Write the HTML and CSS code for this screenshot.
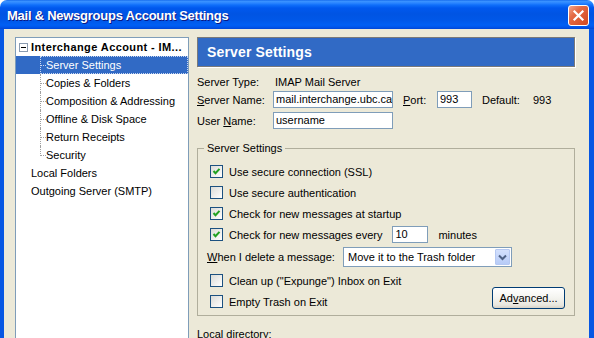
FILE: index.html
```html
<!DOCTYPE html>
<html>
	<head>
		<meta charset="UTF-8">
		<title>Mail &amp; Newsgroups Account Settings</title>
		<link rel="stylesheet" href="styles.css">
	</head>
	<body>
		<div class="window">
			<div class="titlebar">
				<span class="title">Mail &amp; Newsgroups Account Settings</span>
				<span class="close">
					<svg width="19" height="19" viewBox="0 0 19 19"><path d="M5.5 5.5 L13.5 13.5 M13.5 5.5 L5.5 13.5" stroke="#fff" stroke-width="2.2" stroke-linecap="square"/></svg>
				</span>
			</div>
			<div class="client">
				<div class="tree">
					<div class="row account"><span class="twisty"></span>Interchange Account - IM...</div>
					<div class="row child selected"><span class="cell"><span class="branch"></span>Server Settings</span></div>
					<div class="row child"><span class="cell"><span class="branch"></span>Copies &amp; Folders</span></div>
					<div class="row child"><span class="cell"><span class="branch"></span>Composition &amp; Addressing</span></div>
					<div class="row child"><span class="cell"><span class="branch"></span>Offline &amp; Disk Space</span></div>
					<div class="row child"><span class="cell"><span class="branch"></span>Return Receipts</span></div>
					<div class="row child last"><span class="cell"><span class="branch"></span>Security</span></div>
					<div class="row top">Local Folders</div>
					<div class="row top">Outgoing Server (SMTP)</div>
				</div>
				<div class="pane">
					<div class="header">Server Settings</div>
					<div class="field type">
						<span class="label">Server Type:</span>
						<span class="value">IMAP Mail Server</span>
					</div>
					<div class="field server">
						<span class="label"><u>S</u>erver Name:</span>
						<span class="text wide">mail.interchange.ubc.ca</span>
						<span class="port-label"><u>P</u>ort:</span>
						<span class="text port">993</span>
						<span class="default">Default:</span>
						<span>993</span>
					</div>
					<div class="field user">
						<span class="label">User <u>N</u>ame:</span>
						<span class="text wide">username</span>
					</div>
					<fieldset class="group">
						<legend>Server Settings</legend>
						<div class="inner">
							<div class="check"><span class="box"><svg width="11" height="11" viewBox="0 0 11 11"><polyline points="2.5,5 4.5,7.2 8.5,2.8" fill="none" stroke="#21a121" stroke-width="2"/></svg></span>Use secure connection (SSL)</div>
							<div class="check"><span class="box"></span>Use secure authentication</div>
							<div class="check"><span class="box"><svg width="11" height="11" viewBox="0 0 11 11"><polyline points="2.5,5 4.5,7.2 8.5,2.8" fill="none" stroke="#21a121" stroke-width="2"/></svg></span>Check for new messages at startup</div>
							<div class="check"><span class="box"><svg width="11" height="11" viewBox="0 0 11 11"><polyline points="2.5,5 4.5,7.2 8.5,2.8" fill="none" stroke="#21a121" stroke-width="2"/></svg></span>Check for new messages every<span class="text minutes">10</span>minutes</div>
							<div class="when">
								<span class="when-label"><u>W</u>hen I delete a message:</span>
								<span class="select">
									<span class="select-text">Move it to the Trash folder</span>
									<span class="drop"><svg width="13" height="14" viewBox="0 0 13 14"><polyline points="3,5.5 6.5,9 10,5.5" fill="none" stroke="#4d6185" stroke-width="2"/></svg></span>
								</span>
							</div>
							<div class="lastrows">
								<div class="rows">
									<div class="check clean"><span class="box"></span>Clean up ("Expunge") Inbox on Exit</div>
									<div class="check"><span class="box"></span>Empty Trash on Exit</div>
								</div>
								<span class="button">Ad<u>v</u>anced...</span>
							</div>
						</div>
					</fieldset>
					<div class="localdir">Local directory:</div>
				</div>
			</div>
		</div>
	</body>
</html>
```
FILE: styles.css
```css
*{
	margin:0;padding:0;
}
body{
	width:594px;
	height:338px;
	overflow:hidden;
	background:#fff;
	font-family:"Liberation Sans", Arial, sans-serif;
	font-size:11px;
	color:#000;
}
.window{
	height:460px;
	display:flex;
	flex-direction:column;
}
/* title bar */
.titlebar{
	height:29px;
	flex:none;
	box-sizing:border-box;
	display:flex;
	align-items:center;
	padding:2px 5px 0 7px;
	border-radius:7px 7px 0 0;
	background:linear-gradient(to bottom,#0a5fe8 0,#3d95ff 1px,#2b86ff 3px,#0f6ffa 5px,#0058ee 8px,#0054e3 14px,#0057e8 20px,#005ff4 25px,#0056ec 27px,#0046d6 29px);
}
.title{
	flex:1;
	color:#fff;
	font-weight:bold;
	font-size:13px;
	letter-spacing:-0.25px;
	text-shadow:1px 1px #0a1883;
}
.close{
	width:21px;
	height:21px;
	box-sizing:border-box;
	border:1px solid #fff;
	border-radius:3px;
	background:linear-gradient(135deg,#f3a58c 0,#e46a44 35%,#d2481f 100%);
	display:flex;
	align-items:center;
	justify-content:center;
}
/* dialog body */
.client{
	flex:1;
	min-height:0;
	display:flex;
	gap:8px;
	padding:8px 14px 0 11px;
	background:#ece9d8;
	border-left:4px solid #0757e3;
	border-right:5px solid #0757e3;
}
.tree{
	width:174px;
	flex:none;
	box-sizing:border-box;
	border:1px solid #7f9db9;
	background:#fff;
}
.row{
	height:18px;
	display:flex;
	align-items:center;
	white-space:nowrap;
}
.account{
	font-weight:bold;
	letter-spacing:0.4px;
	padding-left:3px;
}
.twisty{
	width:9px;
	height:9px;
	box-sizing:border-box;
	border:1px solid #8a9bb0;
	margin-right:3px;
	background:linear-gradient(#000,#000) center/5px 1px no-repeat,#fff;
}
.child{
	padding-left:24px;
}
.cell{
	flex:1;
	align-self:stretch;
	display:flex;
	align-items:center;
}
.branch{
	width:6px;
	height:18px;
	align-self:flex-start;
	box-sizing:border-box;
	border-left:1px dotted #a0a0a0;
	background:linear-gradient(to right,#a0a0a0 50%,transparent 50%) 0 9px/2px 1px repeat-x;
}
.last .branch{
	height:10px;
}
.selected{
	background:#316ac5;
	color:#fff;
}
.selected .cell{
	outline:1px dotted #c8d6f0;
	outline-offset:-1px;
}
.selected .branch{
	border-left-color:#c8d6f0;
	background-image:linear-gradient(to right,#c8d6f0 50%,transparent 50%);
}
.top{
	padding-left:15px;
}
/* right pane */
.pane{
	flex:1;
	display:flex;
	flex-direction:column;
}
.header{
	height:30px;
	flex:none;
	box-sizing:border-box;
	border:1px solid #7a7a7a;
	box-shadow:1px 1px 0 #fff;
	background:#316ac5;
	color:#fff;
	font-weight:bold;
	font-size:14px;
	letter-spacing:0.15px;
	padding-left:9px;
	display:flex;
	align-items:center;
}
.field{
	display:flex;
	align-items:center;
	height:17px;
	white-space:nowrap;
}
.type{
	margin-top:6px;
}
.server{
	margin-top:1px;
}
.user{
	margin-top:4px;
}
.label{
	width:76px;
	flex:none;
}
.value{
	padding-left:2px;
}
.text{
	height:17px;
	box-sizing:border-box;
	border:1px solid #7f9db9;
	background:#fff;
	padding-left:2px;
	line-height:15px;
	overflow:hidden;
	white-space:nowrap;
}
.wide{
	width:120px;
}
.port-label{
	margin-left:10px;
	width:34px;
}
.port{
	width:35px;
}
.default{
	margin-left:10px;
	width:51px;
}
/* group box */
.group{
	margin-top:13px;
	border:1px solid #b0ae9c;
	padding:0;
}
.group legend{
	margin-left:6px;
	padding:0 3px;
	line-height:13px;
}
.inner{
	padding:6px 9px 3px 0;
}
.check{
	display:flex;
	align-items:center;
	height:21px;
	padding-left:12px;
	white-space:nowrap;
}
.box{
	width:13px;
	height:13px;
	flex:none;
	box-sizing:border-box;
	border:1px solid #1c5180;
	background:linear-gradient(135deg,#dcdcd7,#fff);
	margin-right:6px;
	display:flex;
}
.minutes{
	width:36px;
	margin:0 10px 0 10px;
}
.when{
	display:flex;
	align-items:center;
	height:20px;
	margin-top:2px;
	padding-left:9px;
}
.when-label{
	width:136px;
	flex:none;
}
.select{
	width:169px;
	height:20px;
	box-sizing:border-box;
	border:1px solid #7f9db9;
	background:#fff;
	display:flex;
	align-items:center;
}
.select-text{
	flex:1;
	padding-left:4px;
}
.drop{
	width:15px;
	align-self:stretch;
	margin:1px 1px 1px 0;
	box-sizing:border-box;
	border:1px solid #b5c8f2;
	border-radius:1px;
	background:linear-gradient(#d3e0fd,#b7cbf7);
	display:flex;
	align-items:center;
	justify-content:center;
}
.lastrows{
	display:flex;
	margin-top:3px;
}
.rows{
	flex:1;
}
.button{
	width:73px;
	height:22px;
	flex:none;
	align-self:flex-end;
	margin-bottom:3px;
	box-sizing:border-box;
	border:1px solid #003c74;
	border-radius:3px;
	background:linear-gradient(#fff 0,#f5f5f1 45%,#e9e7df 85%,#d8d2c6 100%);
	display:flex;
	align-items:center;
	justify-content:center;
}
.localdir{
	margin-top:12px;
	line-height:13px;
}
```
